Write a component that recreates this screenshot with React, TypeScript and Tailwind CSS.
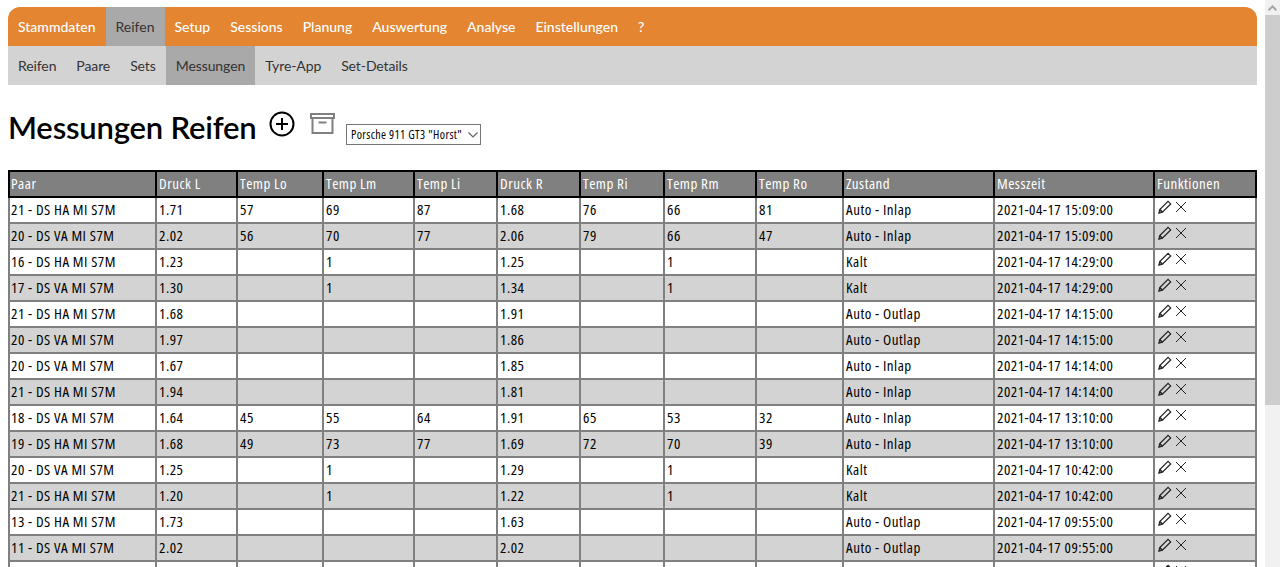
import React from "react";

const mainNav = ["Stammdaten", "Reifen", "Setup", "Sessions", "Planung", "Auswertung", "Analyse", "Einstellungen", "?"];
const subNav = ["Reifen", "Paare", "Sets", "Messungen", "Tyre-App", "Set-Details"];
const columns = [
  { name: "Paar", width: "w-[147px]" },
  { name: "Druck L", width: "w-[81px]" },
  { name: "Temp Lo", width: "w-[86px]" },
  { name: "Temp Lm", width: "w-[91px]" },
  { name: "Temp Li", width: "w-[83px]" },
  { name: "Druck R", width: "w-[83px]" },
  { name: "Temp Ri", width: "w-[84px]" },
  { name: "Temp Rm", width: "w-[92px]" },
  { name: "Temp Ro", width: "w-[87px]" },
  { name: "Zustand", width: "w-[151px]" },
  { name: "Messzeit", width: "w-[160px]" },
  { name: "Funktionen", width: "w-[102px]" },
];

const rows = [
  ["21 - DS HA MI S7M", "1.71", "57", "69", "87", "1.68", "76", "66", "81", "Auto - Inlap", "2021-04-17 15:09:00"],
  ["20 - DS VA MI S7M", "2.02", "56", "70", "77", "2.06", "79", "66", "47", "Auto - Inlap", "2021-04-17 15:09:00"],
  ["16 - DS HA MI S7M", "1.23", "", "1", "", "1.25", "", "1", "", "Kalt", "2021-04-17 14:29:00"],
  ["17 - DS VA MI S7M", "1.30", "", "1", "", "1.34", "", "1", "", "Kalt", "2021-04-17 14:29:00"],
  ["21 - DS HA MI S7M", "1.68", "", "", "", "1.91", "", "", "", "Auto - Outlap", "2021-04-17 14:15:00"],
  ["20 - DS VA MI S7M", "1.97", "", "", "", "1.86", "", "", "", "Auto - Outlap", "2021-04-17 14:15:00"],
  ["20 - DS VA MI S7M", "1.67", "", "", "", "1.85", "", "", "", "Auto - Inlap", "2021-04-17 14:14:00"],
  ["21 - DS HA MI S7M", "1.94", "", "", "", "1.81", "", "", "", "Auto - Inlap", "2021-04-17 14:14:00"],
  ["18 - DS VA MI S7M", "1.64", "45", "55", "64", "1.91", "65", "53", "32", "Auto - Inlap", "2021-04-17 13:10:00"],
  ["19 - DS HA MI S7M", "1.68", "49", "73", "77", "1.69", "72", "70", "39", "Auto - Inlap", "2021-04-17 13:10:00"],
  ["20 - DS VA MI S7M", "1.25", "", "1", "", "1.29", "", "1", "", "Kalt", "2021-04-17 10:42:00"],
  ["21 - DS HA MI S7M", "1.20", "", "1", "", "1.22", "", "1", "", "Kalt", "2021-04-17 10:42:00"],
  ["13 - DS HA MI S7M", "1.73", "", "", "", "1.63", "", "", "", "Auto - Outlap", "2021-04-17 09:55:00"],
  ["11 - DS VA MI S7M", "2.02", "", "", "", "2.02", "", "", "", "Auto - Outlap", "2021-04-17 09:55:00"],
  ["", "", "", "", "", "", "", "", "", "", ""],
];

const PencilIcon = () => (
  <svg width="14" height="14" viewBox="0 0 16 16" fill="none" stroke="#222" strokeWidth="1.4">
    <path d="M11.500 1.500l3 3L5 14l-4 1 1-4z" />
    <path d="M2 11l3 3" strokeWidth="2" />
  </svg>
);

const CloseIcon = () => (
  <svg width="12" height="12" viewBox="0 0 12 12" fill="none" stroke="#222" strokeWidth="1">
    <path d="M1 1l10 10M11 1L1 11" />
  </svg>
);

const App = () => {
  return (
    <div className="flex h-[567px] overflow-hidden bg-white font-['Lato',sans-serif] text-black">
      <div className="w-[1265px] shrink-0 pl-2 pr-2 pt-[7px]">
        <nav className="flex h-[39px] rounded-t-[12px] bg-[#e38531] text-[14px] font-medium">
          {mainNav.map((item) => (
            <a
              key={item}
              className={`flex items-center px-[10px] ${item === "Reifen" ? "bg-[#a9a9a9] font-normal text-[#333]" : "text-white"}`}
            >
              {item}
            </a>
          ))}
        </nav>
        <nav className="flex h-[39px] bg-[#d3d3d3] text-[14px] tracking-[-0.1px] text-[#333]">
          {subNav.map((item) => (
            <a key={item} className={`flex items-center px-[10px] ${item === "Messungen" ? "bg-[#a9a9a9]" : ""}`}>
              {item}
            </a>
          ))}
        </nav>
        <div className="flex h-[85px] items-start pt-[20px]">
          <h1 className="-mt-px w-[261px] text-[31px] leading-[46px] font-semibold tracking-[-0.2px]">Messungen Reifen</h1>
          <svg className="mt-[6px]" width="26" height="26" viewBox="0 0 26 26" fill="none" stroke="#000" strokeWidth="2">
            <circle cx="13" cy="13" r="11.500" />
            <path d="M13 7v12M7 13h12" />
          </svg>
          <svg className="ml-[15px] mt-[7px]" width="25" height="23" viewBox="0 0 25 23" fill="none" stroke="#808080" strokeWidth="2">
            <path d="M1 2h23v4H1zM2.500 6v15h20V6M8.500 10.500h8" />
          </svg>
          <div className="relative ml-[11px] mt-[19px] h-[21px] w-[135px]">
            <select className="block h-full w-full appearance-none border border-[#767676] bg-white pl-1 font-['Open_Sans',sans-serif] text-[12px] tracking-[0.4px] font-stretch-[75%]">
              <option>Porsche 911 GT3 "Horst"</option>
            </select>
            <svg className="absolute right-[3px] top-[8px]" width="10" height="6" viewBox="0 0 10 6" fill="none" stroke="#666" strokeWidth="1.2">
              <path d="M0.500 0.500L5 5l4.500-4.500" />
            </svg>
          </div>
        </div>
        <table className="w-[1248px] table-fixed border-collapse font-['Open_Sans',sans-serif] text-[15px] leading-[20px] tracking-[0.5px] font-stretch-[75%]">
          <thead>
            <tr className="h-[26px] bg-[#808080] text-white">
              {columns.map((col, j) => (
                <th key={col.name} className={`${col.width} border-2 border-black pr-[2px] pb-[2px] text-left font-normal ${j === 0 ? "pl-px" : "pl-[2px]"}`}>
                  {col.name}
                </th>
              ))}
            </tr>
          </thead>
          <tbody>
            {rows.map((row, i) => (
              <tr key={i} className={`h-[26px] ${i % 2 === 1 ? "bg-[#d3d3d3]" : "bg-white"}`}>
                {row.map((cell, j) => (
                  <td key={j} className={`border-2 border-[#808080] pr-[2px] pb-[2px] ${j === 0 ? "pl-px" : "pl-[2px]"}`}>
                    {cell}
                  </td>
                ))}
                <td className="border-2 border-[#808080] pl-[3px]">
                  <div className="flex items-center gap-[3px] pb-[6px]">
                    <PencilIcon />
                    <CloseIcon />
                  </div>
                </td>
              </tr>
            ))}
          </tbody>
        </table>
      </div>
      <div className="flex w-[15px] flex-col bg-[#f1f1f1]">
        <div className="flex h-[15px] items-center justify-center">
          <svg width="9" height="6" viewBox="0 0 9 6" fill="#a3a3a3">
            <path d="M4.500 0L9 4.500 7.800 6 4.500 2.700 1.200 6 0 4.500z" />
          </svg>
        </div>
        <div className="h-[390px] bg-[#cdcdcd]" />
      </div>
    </div>
  );
};

export default App;
